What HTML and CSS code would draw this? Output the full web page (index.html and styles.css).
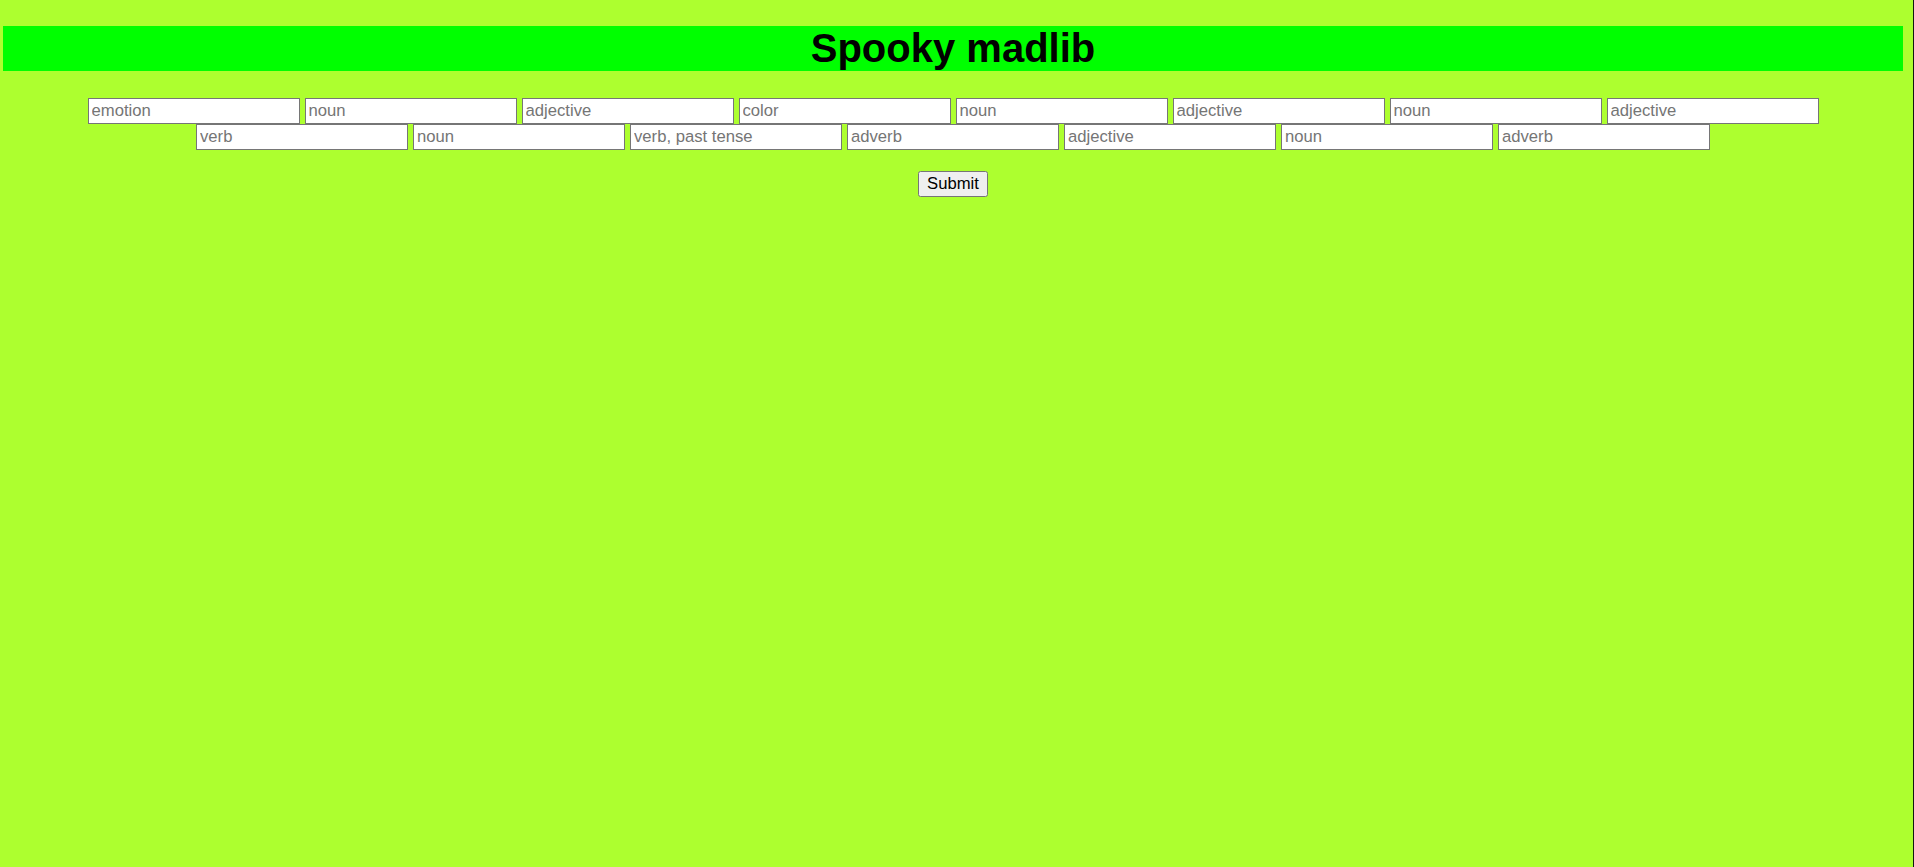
FILE: index.html
```html
<!DOCTYPE html>
<html lang="en">
<head>
<meta charset="utf-8">
<title>Spooky madlib</title>
<link rel="stylesheet" href="styles.css">
</head>
<body>
<h1 class="title">Spooky madlib</h1>
<form class="madlib">
  <div class="fields">
    <input class="field" type="text" placeholder="emotion">
    <input class="field" type="text" placeholder="noun">
    <input class="field" type="text" placeholder="adjective">
    <input class="field" type="text" placeholder="color">
    <input class="field" type="text" placeholder="noun">
    <input class="field" type="text" placeholder="adjective">
    <input class="field" type="text" placeholder="noun">
    <input class="field" type="text" placeholder="adjective">
    <input class="field" type="text" placeholder="verb">
    <input class="field" type="text" placeholder="noun">
    <input class="field" type="text" placeholder="verb, past tense">
    <input class="field" type="text" placeholder="adverb">
    <input class="field" type="text" placeholder="adjective">
    <input class="field" type="text" placeholder="noun">
    <input class="field" type="text" placeholder="adverb">
  </div>
  <div class="actions">
    <button class="submit" type="button">Submit</button>
  </div>
</form>
</body>
</html>
```
FILE: styles.css
```css
html {
  background: #adff2f;
  height: 100%;
  overflow: hidden;
  box-sizing: border-box;
  border-right: 1px solid #0d1a0d;
}

body {
  margin: 0 10px 0 3px;
  padding-top: 1px;
  font-family: "Liberation Serif", serif;
  font-size: 20px;
}

.title {
  margin: 25px 0 27px;
  height: 45px;
  line-height: 45px;
  background: #00ff00;
  color: #000;
  text-align: center;
  font-family: "Liberation Sans", Arial, sans-serif;
  font-weight: bold;
  font-size: 40px;
}

.fields {
  display: flex;
  flex-wrap: wrap;
  justify-content: center;
  column-gap: 5px;
  row-gap: 0;
}

.field {
  box-sizing: border-box;
  width: 212px;
  height: 26px;
  margin: 0;
  padding: 1px 3px;
  border: 1px solid #767676;
  border-radius: 0;
  background: #fff;
  font-family: "Liberation Sans", Arial, sans-serif;
  font-size: 16.67px;
  color: #000;
}

.field::placeholder {
  color: #757575;
}

.actions {
  display: flex;
  justify-content: center;
  margin-top: 21px;
}

.submit {
  box-sizing: border-box;
  height: 26px;
  padding: 0 8px;
  border: 1px solid #767676;
  border-radius: 2.5px;
  background: #efefef;
  color: #000;
  font-family: "Liberation Sans", Arial, sans-serif;
  font-size: 16.67px;
  line-height: 22px;
}
```
